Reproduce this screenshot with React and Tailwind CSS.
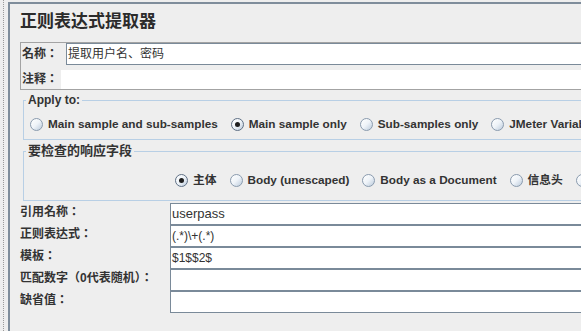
const ui = "font-['Liberation_Sans','Noto_Sans_CJK_TC',sans-serif]"
const sc = "font-['Liberation_Sans','Noto_Sans_CJK_SC',sans-serif]"

function Radio({ checked, label }) {
    return (
        <label className="flex items-center gap-[5px] shrink-0 whitespace-nowrap">
            <span
                className={`w-[13px] h-[13px] rounded-full border flex items-center justify-center bg-linear-to-br from-white via-[#eef3f8] to-[#bccbdc] ${
                    checked ? "border-[#5f7085]" : "border-[#8a9bae]"
                }`}
            >
                {checked && <span className="w-[5px] h-[5px] rounded-full bg-[#1e1e1e]" />}
            </span>
            <span>{label}</span>
        </label>
    )
}

function Field({ label, value, size = "text-[12px]" }) {
    return (
        <div className="flex h-[22px]">
            <div className="w-[150px] shrink-0 font-bold text-[12px] leading-[18px] whitespace-nowrap">{label}</div>
            <div className={`flex-1 bg-white border border-[#7a8a99] pl-[1px] flex items-center ${size} text-[#333]`}>
                {value}
            </div>
        </div>
    )
}

export default function App() {
    return (
        <div className={`${ui} w-[581px] h-[331px] overflow-hidden bg-[#eeeeee] text-[#333] flex`}>
            {/* left split-pane strip */}
            <div className="w-[8px] shrink-0 flex justify-start pl-[3px]">
                <div className="h-full border-l border-dotted border-[#9a9a9a]" />
            </div>

            <div className="mt-[2px] w-[760px] shrink-0 border-l-2 border-t-2 border-[#7f8d9b] flex flex-col">
                <h1 className={`${sc} pl-[10px] pt-[7px] text-[17px] leading-[22px] font-bold text-[#2b2b2b]`}>正则表达式提取器</h1>

                {/* name / comments */}
                <div className="ml-[10px] mt-[9px] border border-[#a3a3a3] flex flex-col">
                    <div className="flex h-[22px]">
                        <div className="w-[45px] pl-[1px] font-bold text-[12px] leading-[22px]">名称：</div>
                        <div className={`${sc} flex-1 bg-white border border-[#7a8a99] pl-[1px] flex items-center text-[12px]`}>
                            提取用户名、密码
                        </div>
                    </div>
                    <div className="flex h-[19px] mt-[5px]">
                        <div className="w-[40px] pl-[1px] font-bold text-[12px] leading-[19px]">注释：</div>
                        <div className="flex-1 bg-white" />
                    </div>
                </div>

                {/* apply to */}
                <fieldset className="ml-[13px] mt-[3px] border border-[#b8cfe5] pt-[7px] pb-[5px]">
                    <legend className="ml-[2px] px-[2px] text-[12px] leading-[14px] font-bold">Apply to:</legend>
                    <div className="flex items-center h-[20px] pl-[6px] gap-[13px] text-[11.75px] font-bold">
                        <Radio label="Main sample and sub-samples" />
                        <Radio label="Main sample only" checked />
                        <Radio label="Sub-samples only" />
                        <Radio label="JMeter Variable Name to use" />
                    </div>
                </fieldset>

                {/* field to check */}
                <fieldset className="ml-[13px] mt-[3px] border border-[#b8cfe5] pt-[11px] pb-[10px]">
                    <legend className={`${sc} ml-[2px] px-[2px] text-[13px] leading-[16px] font-bold`}>要检查的响应字段</legend>
                    <div className="flex items-center h-[20px] pl-[151px] gap-[13px] text-[11.75px] font-bold">
                        <Radio label="主体" checked />
                        <Radio label="Body (unescaped)" />
                        <Radio label="Body as a Document" />
                        <Radio label="信息头" />
                        <Radio label="Request Headers" />
                        <Radio label="URL" />
                    </div>
                </fieldset>

                {/* extractor settings */}
                <div className="ml-[10px] mt-[2px] flex flex-col">
                    <Field label="引用名称：" value="userpass" size="text-[13px]" />
                    <Field label="正则表达式：" value="(.*)\+(.*)" />
                    <Field label="模板：" value="$1$$2$" />
                    <Field label="匹配数字（0代表随机）：" value="" />
                    <Field label="缺省值：" value="" />
                </div>
            </div>
        </div>
    )
}
